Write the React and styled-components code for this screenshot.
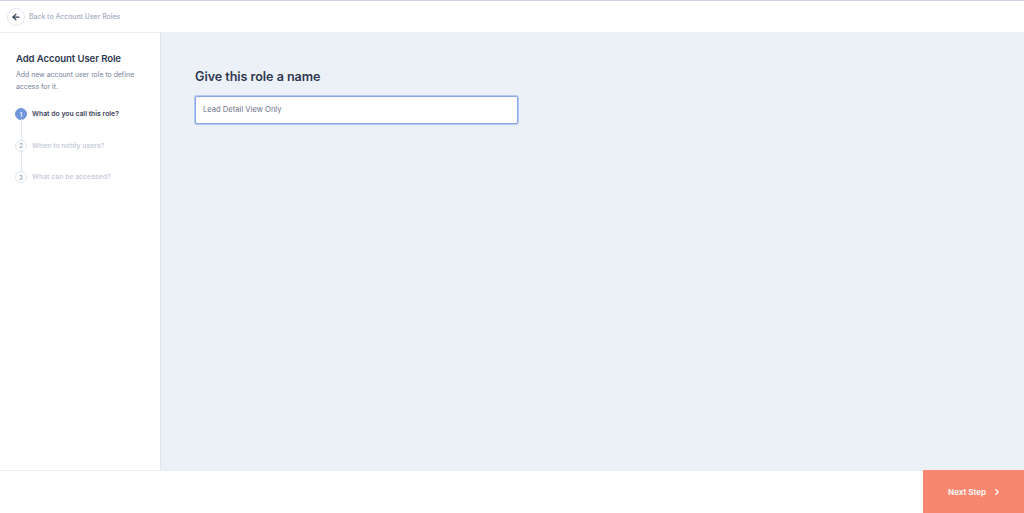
import React from 'react';
import styled, { createGlobalStyle } from 'styled-components';
import { ArrowLeft, ChevronRight } from 'lucide-react';

const Global = createGlobalStyle`
  html, body { margin: 0; padding: 0; height: 100%; background: #fff; }
  #root { height: 100%; }
  * { box-sizing: border-box; }
`;

const Page = styled.div`
  height: 513px;
  display: flex;
  flex-direction: column;
  font-family: Inter, 'Noto Sans', sans-serif;
  background: #fff;
  overflow: hidden;
`;

const TopBar = styled.header`
  flex: 0 0 33px;
  display: flex;
  align-items: center;
  gap: 4px;
  padding: 0 0 0 7px;
  border-top: 1px solid #cbd2e2;
  border-bottom: 1px solid #e9edf4;
`;

const BackButton = styled.button`
  width: 18px;
  height: 18px;
  padding: 0;
  border-radius: 50%;
  border: 1px solid #e3e7f0;
  background: #fff;
  color: #2f3a55;
  display: flex;
  align-items: center;
  justify-content: center;
`;

const BackLabel = styled.span`
  font-size: 6.9px;
  font-weight: 500;
  color: #a5aec4;
`;

const Body = styled.div`
  flex: 1;
  display: flex;
  min-height: 0;
`;

const Sidebar = styled.aside`
  flex: 0 0 161px;
  padding: 20px 16px 0;
  border-right: 1px solid #dfe4ee;
`;

const SideTitle = styled.h2`
  margin: 0;
  font-size: 9.6px;
  line-height: 12px;
  font-weight: 600;
  letter-spacing: -0.1px;
  color: #2f3850;
`;

const SideText = styled.p`
  margin: 4px 0 0;
  font-size: 6.9px;
  line-height: 12px;
  color: #767f98;
`;

const Steps = styled.ol`
  list-style: none;
  margin: 15px 0 0 -1px;
  padding: 0;
`;

const Step = styled.li`
  position: relative;
  height: 31.5px;
  display: flex;
  gap: 5px;

  &:not(:last-child)::after {
    content: '';
    position: absolute;
    left: 5.5px;
    top: 11px;
    bottom: 0;
    width: 1px;
    background: #dbe5f6;
  }
`;

const StepDot = styled.span`
  flex: 0 0 12px;
  width: 12px;
  height: 12px;
  border-radius: 50%;
  display: flex;
  align-items: center;
  justify-content: center;
  font-size: 6px;
  font-weight: 500;
  background: ${p => (p.$active ? '#7296dc' : '#fff')};
  color: ${p => (p.$active ? '#fff' : '#8b93a8')};
  border: 1px solid ${p => (p.$active ? '#7296dc' : '#e3e8f2')};
`;

const StepLabel = styled.span`
  font-size: 6.85px;
  line-height: 12px;
  font-weight: 600;
  color: ${p => (p.$active ? '#3a425c' : '#c9cddb')};
`;

const Main = styled.main`
  flex: 1;
  background: #ecf1f8;
  padding: 35.5px 34px;
`;

const Heading = styled.h1`
  margin: 0;
  font-size: 12.6px;
  line-height: 16px;
  font-weight: 600;
  letter-spacing: -0.05px;
  color: #2f3850;
`;

const NameInput = styled.input`
  display: block;
  width: 323px;
  height: 28px;
  margin-top: 11.5px;
  padding: 0 7px 2px;
  background: #fff;
  border: 1px solid #8aa6ea;
  border-radius: 2px;
  box-shadow: 0 0 0 1px rgba(138, 166, 234, 0.55);
  outline: none;
  font-family: inherit;
  font-size: 7.6px;
  color: #6c7388;
`;

const Footer = styled.footer`
  flex: 0 0 43px;
  display: flex;
  justify-content: flex-end;
  border-top: 1px solid #e9edf4;
`;

const NextButton = styled.button`
  width: 101px;
  margin-top: -1px;
  padding: 0 0 0 3px;
  border: none;
  background: #f8876f;
  color: #fff;
  font-family: inherit;
  font-size: 8px;
  font-weight: 600;
  display: flex;
  align-items: center;
  justify-content: center;
  gap: 6px;
`;

const steps = ['What do you call this role?', 'When to notify users?', 'What can be accessed?'];

export default function App() {
  return (
    <Page>
      <Global />
      <TopBar>
        <BackButton aria-label="Back">
          <ArrowLeft size={10} strokeWidth={3} />
        </BackButton>
        <BackLabel>Back to Account User Roles</BackLabel>
      </TopBar>
      <Body>
        <Sidebar>
          <SideTitle>Add Account User Role</SideTitle>
          <SideText>Add new account user role to define access for it.</SideText>
          <Steps>
            {steps.map((s, i) => (
              <Step key={s}>
                <StepDot $active={i === 0}>{i + 1}</StepDot>
                <StepLabel $active={i === 0}>{s}</StepLabel>
              </Step>
            ))}
          </Steps>
        </Sidebar>
        <Main>
          <Heading>Give this role a name</Heading>
          <NameInput defaultValue="Lead Detail View Only" />
        </Main>
      </Body>
      <Footer>
        <NextButton>
          Next Step
          <ChevronRight size={10} strokeWidth={3} />
        </NextButton>
      </Footer>
    </Page>
  );
}
